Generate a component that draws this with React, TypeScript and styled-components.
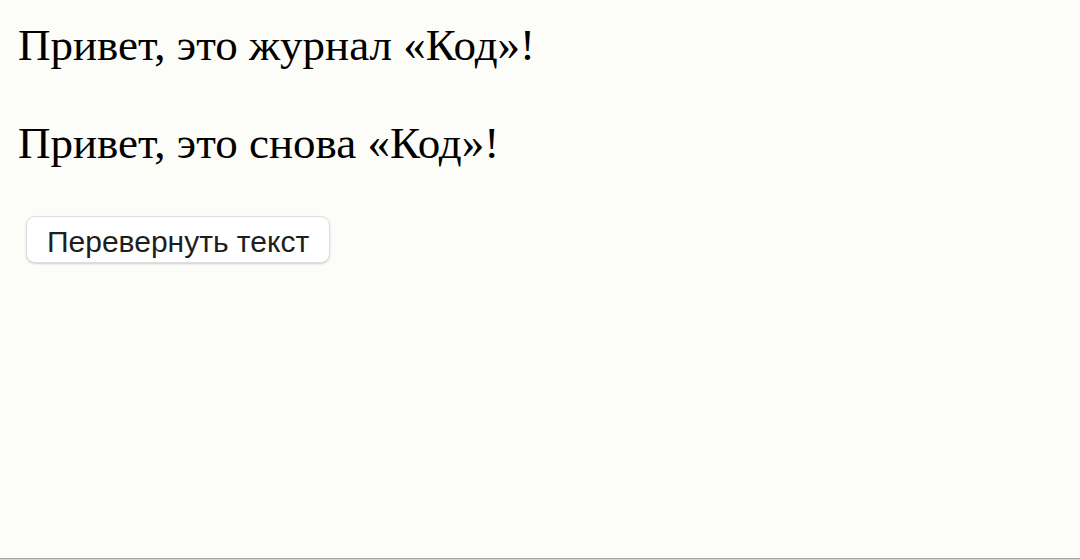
import React, { useState } from "react";
import styled, { createGlobalStyle } from "styled-components";

const GlobalStyle = createGlobalStyle`
  html, body {
    margin: 0;
    padding: 0;
    height: 100%;
    background: #fcfcf8;
  }
  #root {
    height: 100%;
  }
`;

const Page = styled.main`
  box-sizing: border-box;
  height: 559px;
  padding: 20px 18px 0;
  border-bottom: 1px solid #a3a3a8;
  font-family: "Liberation Serif", "Times New Roman", serif;
  color: #000;
`;

const Line = styled.p`
  margin: 0 0 48px;
  font-size: 45px;
  line-height: 50px;
`;

const FlipButton = styled.button`
  box-sizing: border-box;
  margin: 0 0 0 8px;
  height: 47px;
  padding: 4px 20px 0;
  font-family: "Liberation Sans", Arial, sans-serif;
  font-size: 30px;
  line-height: 34px;
  color: #1e1e1e;
  background: #fff;
  border: 1px solid #dedee2;
  border-radius: 9px;
  box-shadow: 0 1px 2px rgba(0, 0, 0, 0.18);
  cursor: pointer;
`;

export default function App() {
  const [flipped, setFlipped] = useState(false);
  const second = "Привет, это снова «Код»!";

  return (
    <>
      <GlobalStyle />
      <Page>
        <Line>Привет, это журнал «Код»!</Line>
        <Line>{flipped ? second.split("").reverse().join("") : second}</Line>
        <FlipButton onClick={() => setFlipped((f) => !f)}>Перевернуть текст</FlipButton>
      </Page>
    </>
  );
}
